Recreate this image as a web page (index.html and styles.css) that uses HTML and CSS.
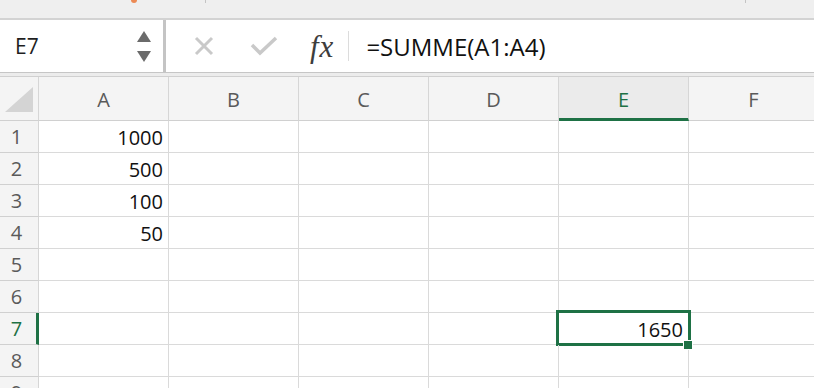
FILE: index.html
```html
<!DOCTYPE html>
<html lang="de">
<head>
    <meta charset="UTF-8">
    <title>Tabelle</title>
    <link rel="stylesheet" href="styles.css">
</head>
<body>
    <div class="titlebar">
        <span class="peek peek-orange"></span>
        <span class="peek peek-tick tick-1"></span>
        <span class="peek peek-tick tick-2"></span>
    </div>

    <div class="formula-bar">
        <div class="name-box">
            <span class="name-text">E7</span>
            <div class="spinner">
                <svg width="14" height="11" viewBox="0 0 14 11"><polygon points="0,11 7,0 14,11" fill="#6b6b6b"/></svg>
                <svg width="14" height="11" viewBox="0 0 14 11"><polygon points="0,0 14,0 7,11" fill="#6b6b6b"/></svg>
            </div>
        </div>
        <div class="formula-area">
            <svg class="icon-cancel" width="22" height="22" viewBox="0 0 22 22">
                <path d="M3 3 L19 19 M19 3 L3 19" stroke="#c9c9c9" stroke-width="3" fill="none"/>
            </svg>
            <svg class="icon-enter" width="28" height="20" viewBox="0 0 28 20">
                <polyline points="2,9 10,17 26,2" stroke="#c9c9c9" stroke-width="3.5" fill="none"/>
            </svg>
            <span class="fx">fx</span>
            <span class="divider"></span>
            <span class="formula-text">=SUMME(A1:A4)</span>
        </div>
    </div>
    <div class="gap"></div>

    <div class="sheet">
        <div class="corner"><span class="corner-tri"></span></div>
        <div class="col-head">A</div>
        <div class="col-head">B</div>
        <div class="col-head">C</div>
        <div class="col-head">D</div>
        <div class="col-head col-active">E</div>
        <div class="col-head">F</div>

        <div class="row-head">1</div>
        <div class="cell">1000</div><div class="cell"></div><div class="cell"></div><div class="cell"></div><div class="cell"></div><div class="cell"></div>

        <div class="row-head">2</div>
        <div class="cell">500</div><div class="cell"></div><div class="cell"></div><div class="cell"></div><div class="cell"></div><div class="cell"></div>

        <div class="row-head">3</div>
        <div class="cell">100</div><div class="cell"></div><div class="cell"></div><div class="cell"></div><div class="cell"></div><div class="cell"></div>

        <div class="row-head">4</div>
        <div class="cell">50</div><div class="cell"></div><div class="cell"></div><div class="cell"></div><div class="cell"></div><div class="cell"></div>

        <div class="row-head">5</div>
        <div class="cell"></div><div class="cell"></div><div class="cell"></div><div class="cell"></div><div class="cell"></div><div class="cell"></div>

        <div class="row-head">6</div>
        <div class="cell"></div><div class="cell"></div><div class="cell"></div><div class="cell"></div><div class="cell"></div><div class="cell"></div>

        <div class="row-head row-active">7</div>
        <div class="cell"></div><div class="cell"></div><div class="cell"></div><div class="cell"></div>
        <div class="cell cell-active">1650<span class="fill-handle"></span></div>
        <div class="cell"></div>

        <div class="row-head">8</div>
        <div class="cell"></div><div class="cell"></div><div class="cell"></div><div class="cell"></div><div class="cell"></div><div class="cell"></div>

        <div class="row-head">9</div>
        <div class="cell"></div><div class="cell"></div><div class="cell"></div><div class="cell"></div><div class="cell"></div><div class="cell"></div>
    </div>
</body>
</html>
```

FILE: styles.css
```css
* {
    margin: 0;
    padding: 0;
    box-sizing: border-box;
}

body {
    font-family: 'Open Sans', 'Noto Sans', sans-serif;
    background: white;
    width: 814px;
    height: 388px;
    overflow: hidden;
}

/* window chrome strip at the very top */
.titlebar {
    position: relative;
    height: 20px;
    background: #efefef;
    border-bottom: 2px solid #d3d3d3;
}

.peek {
    position: absolute;
    top: 0;
}

.peek-orange {
    left: 131px;
    width: 6px;
    height: 3px;
    background: #ec8a55;
    border-radius: 0 0 3px 3px;
}

.peek-tick {
    width: 1px;
    height: 3px;
    background: #c4c4c4;
}

.tick-1 { left: 205px; }
.tick-2 { left: 745px; }

/* formula bar */
.formula-bar {
    display: flex;
    height: 53px;
    border-bottom: 1px solid #c6c6c6;
}

.name-box {
    width: 166px;
    display: flex;
    align-items: center;
    justify-content: space-between;
    padding: 0 12px 0 15px;
    border-right: 3px solid #c4c4c4;
}

.name-text {
    font-size: 21px;
    color: #1f1f1f;
}

.spinner {
    display: flex;
    flex-direction: column;
    gap: 9px;
}

.spinner svg {
    display: block;
}

.formula-area {
    flex: 1;
    display: flex;
    align-items: center;
    padding-left: 27px;
}

.icon-enter {
    margin-left: 35px;
}

.fx {
    margin-left: 32px;
    font-family: 'Liberation Serif', serif;
    font-style: italic;
    font-size: 31px;
    line-height: 1;
    color: #3d3d3d;
    letter-spacing: 1px;
}

.divider {
    width: 1px;
    height: 30px;
    background: #dcdcdc;
    margin-left: 14px;
}

.formula-text {
    margin-left: 17px;
    font-size: 24px;
    color: #111;
}

.gap {
    height: 3px;
    background: #ececec;
}

/* grid */
.sheet {
    display: grid;
    grid-template-columns: 39px repeat(6, 130px);
    grid-template-rows: 44px repeat(9, 32px);
    border-top: 1px solid #d0d0d0;
}

.corner,
.col-head,
.row-head {
    background: #f4f4f4;
    color: #5a5a5a;
    font-size: 20px;
    border-right: 1px solid #d6d6d6;
    border-bottom: 1px solid #d0d0d0;
}

.corner {
    position: relative;
}

.corner-tri {
    position: absolute;
    left: 5px;
    bottom: 8px;
    width: 0;
    height: 0;
    border-left: 28px solid transparent;
    border-bottom: 25px solid #d4d4d4;
}

.col-head {
    display: flex;
    align-items: center;
    justify-content: center;
    padding-top: 2px;
}

.col-active {
    background: #ebebeb;
    color: #1e7145;
    border-bottom: 3px solid #1e7145;
    padding-top: 4px;
}

.row-head {
    display: flex;
    align-items: center;
    justify-content: center;
    padding-right: 5px;
}

.row-active {
    color: #1e7145;
    border-right: 3px solid #1e7145;
    padding-right: 3px;
}

.cell {
    position: relative;
    display: flex;
    align-items: center;
    justify-content: flex-end;
    padding: 2px 5px 0 0;
    font-size: 20px;
    color: #111;
    border-right: 1px solid #dadada;
    border-bottom: 1px solid #dadada;
}

.cell-active::after {
    content: "";
    position: absolute;
    top: -3px;
    left: -3px;
    right: -3px;
    bottom: -2px;
    border: 3px solid #1e7145;
}

.fill-handle {
    position: absolute;
    right: -5px;
    bottom: -6px;
    width: 10px;
    height: 10px;
    background: #1e7145;
    border: 1px solid white;
    z-index: 1;
}
```
